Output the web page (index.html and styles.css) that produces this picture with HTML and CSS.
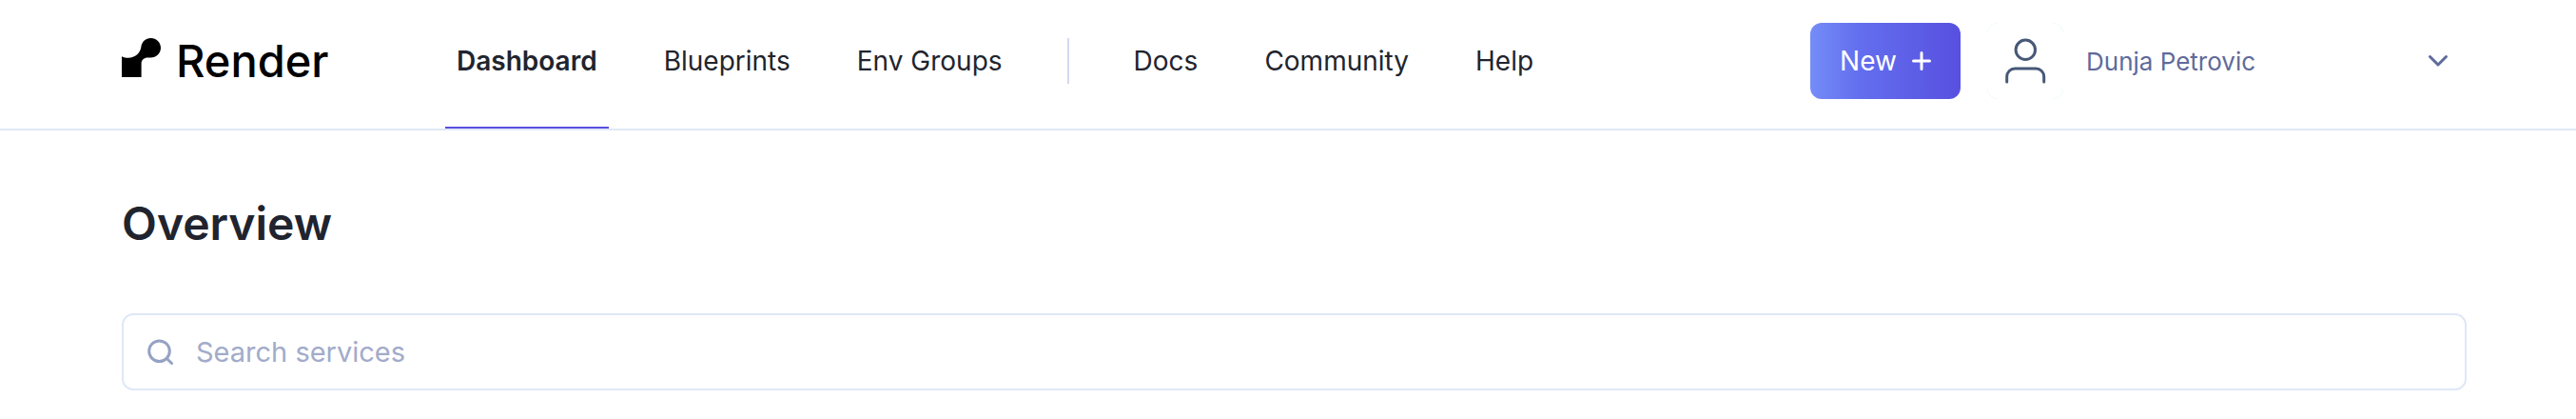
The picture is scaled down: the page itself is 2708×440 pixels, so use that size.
FILE: index.html
```html
<!DOCTYPE html>
<html lang="en">
<head>
<meta charset="utf-8">
<meta name="viewport" content="width=device-width, initial-scale=1">
<title>Render Dashboard</title>
<link rel="stylesheet" href="styles.css">
</head>
<body>
<header class="topbar">
  <a class="brand" href="#">
    <svg class="brand-mark" viewBox="0 0 41 41" aria-hidden="true"><path d="M30.500 0C36.300 0 41 4.600 41 10.300S36.300 20.600 30.500 20.600H27.500C23.500 20.600 20.600 23 20.600 27V41H0V19.200C2 20.200 4.500 20.700 7 20.700C14 20.700 19.500 16 20.400 9C21.200 3.800 25.300 0 30.500 0Z"/></svg>
    <span class="brand-name">Render</span>
  </a>
  <nav class="nav">
    <a class="nav-link nav-link-active" href="#" aria-current="page">Dashboard</a>
    <a class="nav-link" href="#">Blueprints</a>
    <a class="nav-link" href="#">Env Groups</a>
    <span class="nav-divider"></span>
    <a class="nav-link" href="#">Docs</a>
    <a class="nav-link" href="#">Community</a>
    <a class="nav-link" href="#">Help</a>
  </nav>
  <div class="actions">
    <button class="new-button" type="button">New
      <svg class="plus" viewBox="0 0 20 20" aria-hidden="true"><path d="M10 1.500V18.500M1.500 10H18.500"/></svg>
    </button>
    <button class="account" type="button">
      <span class="avatar"><svg class="avatar-icon" viewBox="0 0 44 48" aria-hidden="true"><circle cx="22.300" cy="12.300" r="10.200"/><path d="M2.700 46V40.500A8.500 8.500 0 0 1 11.200 32H33.200A8.500 8.500 0 0 1 41.700 40.500V46"/></svg></span>
      <span class="account-name">Dunja Petrovic</span>
      <svg class="chevron" viewBox="0 0 22 14" aria-hidden="true"><path d="M2.500 2.500L11 11L19.500 2.500"/></svg>
    </button>
  </div>
</header>
<main class="content">
  <h1 class="title">Overview</h1>
  <label class="search">
    <svg class="search-icon" viewBox="0 0 28 28" aria-hidden="true"><circle cx="13.500" cy="12.700" r="10.800"/><path d="M21.300 20.500L26.500 25.500"/></svg>
    <input class="search-input" type="search" placeholder="Search services" aria-label="Search services">
  </label>
</main>
</body>
</html>
```
FILE: styles.css
```css
* {
  box-sizing: border-box;
}

body {
  margin: 0;
  background: #fff;
  color: #21242e;
  font-family: Inter, "Liberation Sans", sans-serif;
  font-size: 28px;
}

a {
  color: inherit;
  text-decoration: none;
}

button,
input {
  font: inherit;
}

svg {
  flex: none;
  fill: none;
  stroke: currentColor;
  stroke-linecap: round;
  stroke-linejoin: round;
}

.topbar {
  display: flex;
  align-items: stretch;
  min-height: 137px;
  padding: 0 116px 0 128px;
  border-bottom: 2px solid #dfe8f7;
}

.brand {
  display: flex;
  align-items: baseline;
  align-self: flex-start;
  gap: 16px;
  width: 340px;
  padding-top: 34px;
  color: #000;
}

.brand-mark {
  width: 41px;
  height: 41px;
  fill: currentColor;
  stroke: none;
}

.brand-name {
  font-size: 47px;
  font-weight: 500;
  line-height: 60px;
}

.nav {
  display: flex;
  gap: 46px;
}

.nav-link {
  display: flex;
  padding: 48px 12px 0;
  border-bottom: 2px solid transparent;
  line-height: 32px;
}

.nav-link-active {
  border-color: #5850e0;
  font-weight: 600;
}

.nav-divider {
  width: 2px;
  height: 48px;
  margin: 40px 10px 0;
  background: #d3d9ee;
}

.actions {
  display: flex;
  align-items: flex-start;
  gap: 28px;
  margin-left: auto;
  padding-top: 24px;
}

.new-button {
  display: flex;
  align-items: center;
  justify-content: center;
  gap: 16px;
  width: 158px;
  height: 80px;
  border: 0;
  border-radius: 12px;
  background: linear-gradient(90deg, #758cf8, #636eee 33%, #5850e0);
  color: #fff;
}

.plus {
  width: 20px;
  height: 20px;
  stroke-width: 3;
}

.account {
  display: flex;
  align-items: center;
  width: 503px;
  padding: 0 18px 0 0;
  border: 0;
  background: none;
  color: #5f6b9a;
  font-size: 26px;
  text-align: left;
}

.avatar {
  margin-right: 24px;
  border-radius: 12px;
  background: #b8ece0;
  color: #475878;
}

.avatar-icon {
  display: block;
  width: 80px;
  height: 80px;
  padding: 16px 18px;
  border-radius: 12px;
  background: #fff;
  stroke-width: 3;
}

.account-name {
  flex: 1;
}

.chevron {
  width: 22px;
  height: 14px;
  stroke-width: 3;
}

.content {
  padding: 68px 115px 28px 128px;
}

.title {
  margin: 0;
  font-size: 48px;
  font-weight: 600;
  line-height: 60px;
}

.search {
  display: flex;
  align-items: center;
  gap: 24px;
  height: 81px;
  margin-top: 64px;
  padding: 0 24px;
  border: 2px solid #dfe8f7;
  border-radius: 12px;
  color: #96a2c4;
}

.search-icon {
  width: 28px;
  height: 28px;
  stroke-width: 3;
}

.search-input {
  flex: 1;
  min-width: 0;
  padding: 0;
  border: 0;
  outline: 0;
  background: none;
  color: #21242e;
  font-size: 29px;
}

.search-input::placeholder {
  color: #a2abca;
  opacity: 1;
}
```
